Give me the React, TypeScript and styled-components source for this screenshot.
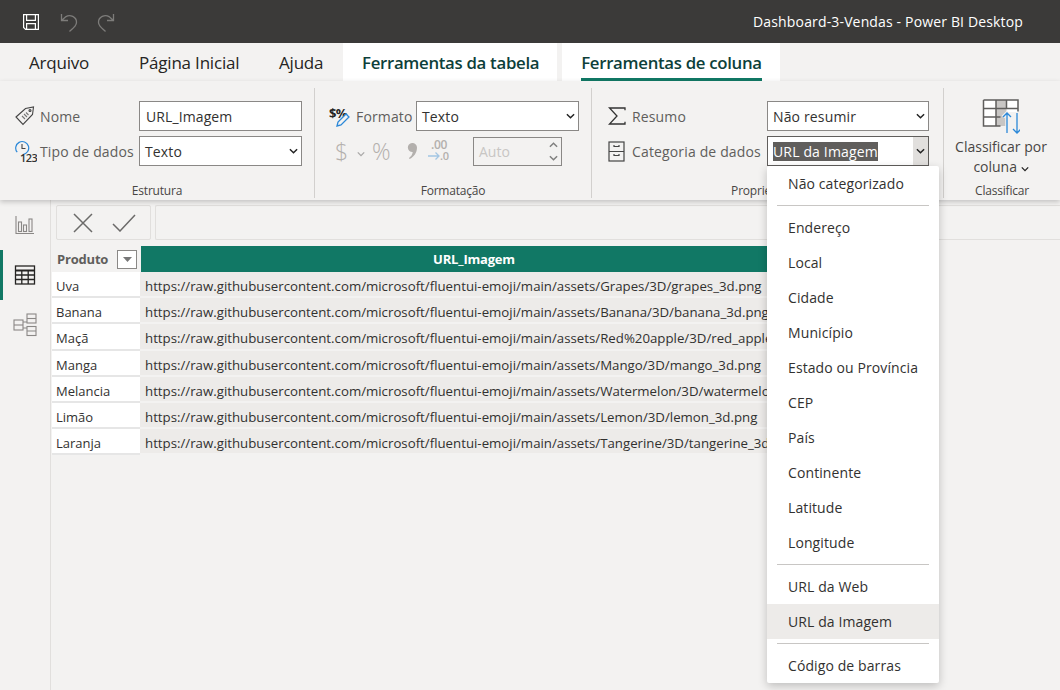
import React from "react";
import styled, { createGlobalStyle } from "styled-components";

const tealDark = "#117865";

const GlobalStyle = createGlobalStyle`
  html, body {
    margin: 0;
    padding: 0;
    background: #f3f2f1;
  }
  body {
    font-family: "Open Sans", "Noto Sans", "Liberation Sans", sans-serif;
    color: #252423;
    overflow: hidden;
  }
`;

const rows = [
  ["Uva", "Grapes/3D/grapes_3d.png"],
  ["Banana", "Banana/3D/banana_3d.png"],
  ["Maçã", "Red%20apple/3D/red_apple_3d.png"],
  ["Manga", "Mango/3D/mango_3d.png"],
  ["Melancia", "Watermelon/3D/watermelon_3d.png"],
  ["Limão", "Lemon/3D/lemon_3d.png"],
  ["Laranja", "Tangerine/3D/tangerine_3d.png"],
];

const baseUrl =
  "https://raw.githubusercontent.com/microsoft/fluentui-emoji/main/assets/";

const menuGroups = [
  ["Não categorizado"],
  [
    "Endereço",
    "Local",
    "Cidade",
    "Município",
    "Estado ou Província",
    "CEP",
    "País",
    "Continente",
    "Latitude",
    "Longitude",
  ],
  ["URL da Web", "URL da Imagem"],
  ["Código de barras"],
];

const Chevron: React.FC = () => (
  <svg width="10" height="6" viewBox="0 0 10 6">
    <path d="M1 1l4 4 4-4" fill="none" stroke="#222" strokeWidth="1.6" />
  </svg>
);

const SaveIcon = () => (
  <svg width="20" height="20" viewBox="0 0 20 20" fill="none" stroke="#fff" strokeWidth="1.2">
    <path d="M2.6 2.6h14.8v14.8H4.6l-2-2z" />
    <path d="M5.6 2.6v5.8h8.8V2.6M5.6 17.4v-5.8h8.8v5.8" />
  </svg>
);

const UndoIcon: React.FC<{ flip?: boolean }> = ({ flip }) => (
  <svg
    width="18"
    height="20"
    viewBox="0 0 18 20"
    fill="none"
    stroke="#7d7c7a"
    strokeWidth="1.3"
    transform={flip ? "scale(-1 1)" : undefined}
  >
    <path d="M1.5 2v6.5H8M1.5 8.5L6 4.6c4-2.6 10.5.2 10.5 5.6 0 3-1.7 4.5-7 9.3" />
  </svg>
);

const TagIcon = () => (
  <svg width="20" height="20" viewBox="0 0 20 20" fill="none" stroke="#444" strokeWidth="1.1">
    <path d="M1 11L10.5 2.5 18.5 1l-1 7.5L8 18.5z" />
    <circle cx="15" cy="4.5" r="1" />
    <path d="M7 10l3 3M9 8l3 3M11 6.5l2.5 2.5" stroke="#777" />
  </svg>
);

const TypeIcon = () => (
  <svg width="22" height="26" viewBox="0 0 22 26" fill="none">
    <path d="M2.2 14.2A6.5 6.5 0 1 1 8 16.5" stroke="#2b88d8" strokeWidth="1.2" />
    <path d="M7 6v4.5h3.5" stroke="#444" strokeWidth="1.1" />
    <text x="5" y="24" fontSize="11" fontWeight="600" fontFamily="Open Sans, sans-serif" fill="#333" letterSpacing="-0.6">
      123
    </text>
  </svg>
);

const FormatIcon = () => (
  <svg width="22" height="24" viewBox="0 0 22 24" fill="none">
    <text x="0" y="14" fontSize="13" fontWeight="700" fontFamily="Open Sans, sans-serif" fill="#252423" letterSpacing="-0.8">
      $%
    </text>
    <path d="M8 22l1-4 8-8 3 3-8 8z" fill="#f3f2f1" stroke="#2b88d8" strokeWidth="1.3" />
  </svg>
);

const SigmaIcon = () => (
  <svg width="18" height="18" viewBox="0 0 18 18" fill="none" stroke="#333" strokeWidth="1.3">
    <path d="M17 3.2V1H1.5l7.5 8-7.5 8H17v-2.2" />
  </svg>
);

const CategoryIcon = () => (
  <svg width="17" height="21" viewBox="0 0 17 21" fill="none" stroke="#444" strokeWidth="1.2">
    <rect x="1" y="1" width="15" height="19" />
    <path d="M1 10.5h15M6 4v1.5h5V4M6 13v1.5h5V13" />
  </svg>
);

const CommaIcon = () => (
  <svg width="11" height="18" viewBox="0 0 11 18">
    <path d="M5 1a4.5 4.5 0 0 1 5 4.5C10 10.5 7 15 2.5 17L2 16c2.5-1.8 3.5-3.8 3.7-6A4.5 4.5 0 0 1 5 1z" fill="#b3b0ad" />
  </svg>
);

const DecimalIcon = () => (
  <svg width="24" height="26" viewBox="0 0 24 26" fill="none">
    <text x="3" y="11" fontSize="12" fontWeight="600" fontFamily="Open Sans, sans-serif" fill="#b3b0ad" letterSpacing="-0.3">
      .00
    </text>
    <text x="12" y="22" fontSize="11" fontWeight="600" fontFamily="Open Sans, sans-serif" fill="#b3b0ad" letterSpacing="-0.3">
      .0
    </text>
    <path d="M0 18h11M7.5 14.5L11 18l-3.5 3.5" stroke="#a3c6e3" strokeWidth="1.3" />
  </svg>
);

const SortIcon = () => (
  <svg width="38" height="38" viewBox="0 0 38 38" fill="none">
    <path d="M1.5 1H36v12H24v14H1.5z" fill="#fff" />
    <rect x="14" y="1" width="10.5" height="26" fill="#c8c6c4" />
    <path d="M1.5 1H36v11.5M1.5 1v26h17M1.5 9.5h34M1.5 18h17M14 1v26M24.5 1v9" stroke="#5f5e5c" strokeWidth="1.5" />
    <path d="M25 14v20M21 18l4-4 4 4" stroke="#f3f2f1" strokeWidth="3.5" />
    <path d="M25 34V14M21 18l4-4 4 4M35 14v20M31 30l4 4 4-4" stroke="#2b88d8" strokeWidth="1.3" />
  </svg>
);

const ReportIcon = () => (
  <svg width="20" height="20" viewBox="0 0 20 20" fill="none" stroke="#8a8886" strokeWidth="1.1">
    <path d="M1 1v17.5h18" />
    <rect x="3.5" y="7" width="3" height="9.5" />
    <rect x="8.5" y="10" width="3" height="6.5" />
    <rect x="14" y="4" width="3" height="12.5" />
  </svg>
);

const DataIcon = () => (
  <svg width="22" height="20" viewBox="0 0 22 20" fill="none" stroke="#252423" strokeWidth="1.3">
    <rect x="1.5" y="1" width="19" height="18" />
    <path d="M1.5 5.5h19" strokeWidth="2" />
    <path d="M1.5 10h19M1.5 14.5h19M7.8 5.5V19M14.2 5.5V19" />
  </svg>
);

const ModelIcon = () => (
  <svg width="24" height="24" viewBox="0 0 24 24" fill="none" stroke="#8a8886" strokeWidth="1.1">
    <rect x="1" y="7" width="9" height="10" />
    <path d="M1 12h9" />
    <rect x="14" y="1" width="9" height="9" />
    <path d="M14 5.5h9" />
    <rect x="14" y="13.5" width="9" height="9" />
    <path d="M14 18h9M10 9h4M10 15h4" />
  </svg>
);

const Field: React.FC<{ children: React.ReactNode; width: number }> = ({
  children,
  width,
}) => (
  <SelectBox $width={width}>
    <SelectText>{children}</SelectText>
    <Arrow>
      <Chevron />
    </Arrow>
  </SelectBox>
);

const App: React.FC = () => {
  return (
    <Page>
      <GlobalStyle />
      <TitleBar>
        <QuickActions>
          <SaveIcon />
          <UndoIcon />
          <UndoIcon flip />
        </QuickActions>
        <WindowTitle>Dashboard-3-Vendas - Power BI Desktop</WindowTitle>
      </TitleBar>

      <TabBar>
        <Tab $width={139}>Arquivo</Tab>
        <Tab $width={140}>Página Inicial</Tab>
        <Tab $width={64}>Ajuda</Tab>
        <ToolTab>Ferramentas da tabela</ToolTab>
        <ToolTab $active>Ferramentas de coluna</ToolTab>
      </TabBar>

      <Ribbon>
        <Group $width={315}>
          <GroupBody $pad={15}>
            <FormRow>
              <IconSlot>
                <TagIcon />
              </IconSlot>
              <FieldLabel $width={99}>Nome</FieldLabel>
              <TextInput readOnly value="URL_Imagem" />
            </FormRow>
            <FormRow>
              <IconSlot>
                <TypeIcon />
              </IconSlot>
              <FieldLabel $width={99}>Tipo de dados</FieldLabel>
              <Field width={163}>Texto</Field>
            </FormRow>
          </GroupBody>
          <GroupLabel>Estrutura</GroupLabel>
        </Group>

        <Group $width={277}>
          <GroupBody $pad={14}>
            <FormRow>
              <IconSlot $width={27}>
                <FormatIcon />
              </IconSlot>
              <FieldLabel $width={60}>Formato</FieldLabel>
              <Field width={163}>Texto</Field>
            </FormRow>
            <FormatRow>
              <DisabledGlyph $width={22}>$</DisabledGlyph>
              <SmallChevron>
                <Chevron />
              </SmallChevron>
              <DisabledGlyph $width={35}>%</DisabledGlyph>
              <IconCell $width={21}>
                <CommaIcon />
              </IconCell>
              <IconCell $width={45}>
                <DecimalIcon />
              </IconCell>
              <Spinner>
                Auto
                <SpinnerArrows>
                  <SpinUp>
                    <Chevron />
                  </SpinUp>
                  <Chevron />
                </SpinnerArrows>
              </Spinner>
            </FormatRow>
          </GroupBody>
          <GroupLabel>Formatação</GroupLabel>
        </Group>

        <Group $width={352}>
          <GroupBody $pad={16}>
            <FormRow>
              <IconSlot $width={24}>
                <SigmaIcon />
              </IconSlot>
              <FieldLabel $width={135}>Resumo</FieldLabel>
              <Field width={162}>Não resumir</Field>
            </FormRow>
            <FormRow>
              <IconSlot $width={24}>
                <CategoryIcon />
              </IconSlot>
              <FieldLabel $width={135}>Categoria de dados</FieldLabel>
              <SelectBox $width={162} $focused>
                <SelectText>
                  <Highlighted>URL da Imagem</Highlighted>
                </SelectText>
                <Arrow $pressed>
                  <Chevron />
                </Arrow>
              </SelectBox>
            </FormRow>
          </GroupBody>
          <GroupLabel>Propriedades</GroupLabel>
        </Group>

        <Group $width={116} $last>
          <SortButton>
            <SortIcon />
            <SortText>
              Classificar por
              <br />
              coluna <Chevron />
            </SortText>
          </SortButton>
          <GroupLabel>Classificar</GroupLabel>
        </Group>
      </Ribbon>

      <Workspace>
        <Rail>
          <RailItem>
            <ReportIcon />
          </RailItem>
          <RailItem $active>
            <DataIcon />
          </RailItem>
          <RailItem>
            <ModelIcon />
          </RailItem>
        </Rail>

        <Main>
          <FormulaBar>
            <FormulaActions>
              <svg width="22" height="20" viewBox="0 0 22 20" fill="none" stroke="#6b6a69" strokeWidth="1.5">
                <path d="M2 1l18 18M20 1L2 19" />
              </svg>
              <svg width="24" height="18" viewBox="0 0 24 18" fill="none" stroke="#6b6a69" strokeWidth="1.5">
                <path d="M1 10l7 7L23 1" />
              </svg>
            </FormulaActions>
            <FormulaInput />
          </FormulaBar>

          <Table>
            <ProductHead>
              Produto
              <FilterButton>
                <svg width="9" height="5" viewBox="0 0 9 5">
                  <path d="M0 0h9L4.5 5z" fill="#777" />
                </svg>
              </FilterButton>
            </ProductHead>
            <UrlHead>URL_Imagem</UrlHead>
            {rows.map(([name, path]) => (
              <React.Fragment key={name}>
                <ProductCell>{name}</ProductCell>
                <UrlCell>
                  {baseUrl}
                  {path}
                </UrlCell>
              </React.Fragment>
            ))}
          </Table>
        </Main>
      </Workspace>

      <Menu>
        {menuGroups.map((group, index) => (
          <React.Fragment key={group[0]}>
            {index > 0 && <MenuDivider />}
            {group.map((item) => (
              <MenuItem key={item} $selected={item === "URL da Imagem"}>
                {item}
              </MenuItem>
            ))}
          </React.Fragment>
        ))}
      </Menu>
    </Page>
  );
};

const Page = styled.div`
  position: relative;
  width: 1060px;
  height: 690px;
  overflow: hidden;
  display: flex;
  flex-direction: column;
`;

const TitleBar = styled.header`
  height: 43px;
  flex: none;
  background: #3b3a39;
  display: flex;
  align-items: center;
  justify-content: space-between;
  padding: 0 37px 0 21px;
`;

const QuickActions = styled.div`
  display: flex;
  align-items: center;
  gap: 19px;
`;

const WindowTitle = styled.div`
  color: #fff;
  font-size: 14px;
  letter-spacing: 0.15px;
`;

const TabBar = styled.nav`
  height: 38px;
  flex: none;
  display: flex;
  background: #f3f2f1;
`;

const Tab = styled.div<{ $width: number }>`
  width: ${({ $width }) => $width}px;
  padding-top: 8px;
  font-size: 17px;
  letter-spacing: -0.2px;
  color: #252423;
  &:first-child {
    padding-left: 29px;
    width: 110px;
  }
`;

const ToolTab = styled.div<{ $active?: boolean }>`
  position: relative;
  background: #fff;
  height: 38px;
  padding: 8px 18px 0 19px;
  margin-right: 5px;
  box-sizing: border-box;
  font-size: 16.8px;
  font-weight: 600;
  letter-spacing: -0.3px;
  color: #0d3f3a;
  &:after {
    content: "";
    display: ${({ $active }) => ($active ? "block" : "none")};
    position: absolute;
    left: 19px;
    right: 18px;
    bottom: 0;
    height: 3px;
    background: ${tealDark};
  }
`;

const Ribbon = styled.section`
  position: relative;
  z-index: 2;
  height: 119px;
  flex: none;
  display: flex;
  background: #f3f2f1;
  box-shadow: 0 2px 5px rgba(0, 0, 0, 0.2);
`;

const Group = styled.div<{ $width: number; $last?: boolean }>`
  width: ${({ $width }) => $width}px;
  flex: none;
  display: flex;
  flex-direction: column;
  box-sizing: border-box;
  border-right: ${({ $last }) => ($last ? "none" : "1px solid #d2d0ce")};
  margin: 7px 0 2px;
`;

const GroupBody = styled.div<{ $pad: number }>`
  flex: 1;
  display: flex;
  flex-direction: column;
  gap: 5px;
  padding: 13px 0 0 ${({ $pad }) => $pad}px;
`;

const GroupLabel = styled.div`
  font-size: 12px;
  letter-spacing: -0.2px;
  text-align: center;
  color: #484644;
  height: 14px;
  line-height: 14px;
`;

const FormRow = styled.div`
  display: flex;
  align-items: center;
  height: 30px;
`;

const IconSlot = styled.span<{ $width?: number }>`
  width: ${({ $width }) => $width ?? 25}px;
  flex: none;
  display: flex;
  align-items: center;
`;

const FieldLabel = styled.span<{ $width: number }>`
  width: ${({ $width }) => $width}px;
  flex: none;
  font-size: 14px;
  letter-spacing: 0.15px;
  color: #605e5c;
  white-space: nowrap;
`;

const TextInput = styled.input`
  width: 163px;
  height: 30px;
  box-sizing: border-box;
  border: 1px solid #8a8886;
  background: #fff;
  padding: 1px 6px 0;
  font: inherit;
  font-size: 14px;
  letter-spacing: 0.1px;
  color: #323130;
  outline: none;
`;

const SelectBox = styled.div<{ $width: number; $focused?: boolean }>`
  width: ${({ $width }) => $width}px;
  height: 30px;
  flex: none;
  box-sizing: border-box;
  border: 1px solid ${({ $focused }) => ($focused ? "#605e5c" : "#8a8886")};
  background: #fff;
  display: flex;
  align-items: center;
  justify-content: space-between;
`;

const SelectText = styled.span`
  padding: 1px 0 0 5px;
  font-size: 14px;
  letter-spacing: 0.15px;
  color: #323130;
`;

const Highlighted = styled.span`
  background: #605e5c;
  color: #fff;
`;

const Arrow = styled.span<{ $pressed?: boolean }>`
  width: 15px;
  height: 100%;
  display: flex;
  align-items: center;
  justify-content: center;
  background: ${({ $pressed }) => ($pressed ? "#e1dfdd" : "transparent")};
  svg {
    width: 9px;
  }
`;

const FormatRow = styled.div`
  display: flex;
  align-items: center;
  height: 30px;
  margin-left: 6px;
`;

const DisabledGlyph = styled.span<{ $width: number }>`
  width: ${({ $width }) => $width}px;
  flex: none;
  font-size: 23px;
  font-weight: 300;
  line-height: 30px;
  color: #b3b0ad;
`;

const SmallChevron = styled.span`
  width: 15px;
  display: flex;
  padding-top: 6px;
  svg {
    width: 8px;
    opacity: 0.35;
  }
`;

const IconCell = styled.span<{ $width: number }>`
  width: ${({ $width }) => $width}px;
  flex: none;
  display: flex;
  align-items: center;
`;

const Spinner = styled.div`
  width: 89px;
  height: 29px;
  box-sizing: border-box;
  border: 1px solid #8a8886;
  display: flex;
  align-items: center;
  justify-content: space-between;
  padding: 0 3px 0 5px;
  font-size: 14px;
  color: #c8c6c4;
`;

const SpinnerArrows = styled.span`
  display: flex;
  flex-direction: column;
  gap: 7px;
  svg {
    display: block;
    width: 9px;
    opacity: 0.55;
  }
`;

const SpinUp = styled.span`
  transform: scaleY(-1);
`;

const SortButton = styled.div`
  flex: 1;
  display: flex;
  flex-direction: column;
  align-items: center;
  padding-top: 11px;
  margin-right: 2px;
`;

const SortText = styled.div`
  font-size: 14px;
  line-height: 20px;
  text-align: center;
  color: #484644;
  svg {
    width: 8px;
  }
`;

const Workspace = styled.main`
  flex: 1;
  display: flex;
  min-height: 0;
`;

const Rail = styled.aside`
  width: 51px;
  flex: none;
  box-sizing: border-box;
  border-right: 1px solid #e1dfdd;
`;

const RailItem = styled.div<{ $active?: boolean }>`
  height: 50px;
  display: flex;
  align-items: center;
  justify-content: center;
  box-sizing: border-box;
  border-left: 3px solid ${({ $active }) => ($active ? tealDark : "transparent")};
  padding-right: 3px;
`;

const Main = styled.div`
  flex: 1;
  min-width: 0;
`;

const FormulaBar = styled.div`
  display: flex;
  gap: 4px;
  height: 40px;
  padding: 5px 0 0 5px;
  box-sizing: border-box;
`;

const FormulaActions = styled.div`
  width: 95px;
  box-sizing: border-box;
  border: 1px solid #e1dfdd;
  border-radius: 2px;
  display: flex;
  align-items: center;
  gap: 18px;
  padding-left: 15px;
`;

const FormulaInput = styled.div`
  flex: 1;
  box-sizing: border-box;
  border: 1px solid #e1dfdd;
  border-right: none;
  border-radius: 2px 0 0 2px;
`;

const Table = styled.div`
  display: grid;
  grid-template-columns: 88px 667px;
  grid-auto-rows: 26.15px;
  margin: 6px 0 0 1px;
  font-size: 13px;
`;

const ProductHead = styled.div`
  display: flex;
  align-items: center;
  justify-content: space-between;
  padding: 0 3px 0 5px;
  font-weight: 700;
  color: #605e5c;
  letter-spacing: -0.2px;
`;

const FilterButton = styled.span`
  width: 20px;
  height: 19px;
  box-sizing: border-box;
  border: 1px solid #8a8886;
  background: #fff;
  display: flex;
  align-items: center;
  justify-content: center;
`;

const UrlHead = styled.div`
  background: ${tealDark};
  color: #fff;
  font-weight: 700;
  text-align: center;
  line-height: 26px;
  letter-spacing: -0.2px;
  margin-left: 1px;
`;

const ProductCell = styled.div`
  background: #fff;
  border-bottom: 2px solid #e6e6e6;
  padding-left: 4px;
  line-height: 28px;
  color: #323130;
`;

const UrlCell = styled.div`
  background: #edebe9;
  border-bottom: 2px solid #f3f2f1;
  padding-left: 5px;
  line-height: 28px;
  color: #323130;
  font-size: 13.25px;
  white-space: nowrap;
  overflow: hidden;
`;

const Menu = styled.div`
  position: absolute;
  z-index: 3;
  left: 767px;
  top: 166px;
  width: 172px;
  background: #fff;
  border-radius: 2px;
  box-shadow: 0 3px 10px rgba(0, 0, 0, 0.22);
`;

const MenuItem = styled.div<{ $selected?: boolean }>`
  height: 35px;
  line-height: 35px;
  padding-left: 21px;
  font-size: 14px;
  letter-spacing: 0.1px;
  color: #323130;
  white-space: nowrap;
  background: ${({ $selected }) => ($selected ? "#edebe9" : "transparent")};
`;

const MenuDivider = styled.div`
  height: 1px;
  margin: 4px 10px;
  background: #c8c6c4;
`;

export default App;
